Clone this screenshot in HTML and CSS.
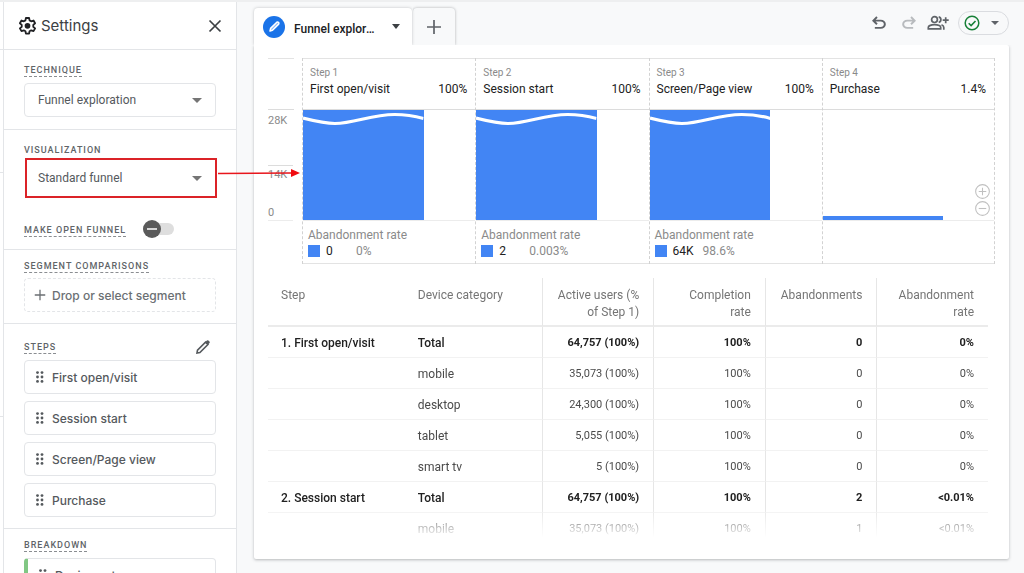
FILE: index.html
```html
<!DOCTYPE html>
<html lang="en">
<head>
<meta charset="utf-8">
<title>Funnel exploration</title>
<link rel="stylesheet" href="styles.css">
</head>
<body>
<svg class="defs" aria-hidden="true">
  <symbol id="grip" viewBox="0 0 8 12"><g fill="currentColor"><circle cx="1.5" cy="1.6" r="1.4"/><circle cx="6" cy="1.6" r="1.4"/><circle cx="1.5" cy="6" r="1.4"/><circle cx="6" cy="6" r="1.4"/><circle cx="1.5" cy="10.4" r="1.4"/><circle cx="6" cy="10.4" r="1.4"/></g></symbol>
  <symbol id="undo" viewBox="0 0 24 24"><path fill="currentColor" d="M7 19v-2.3h7.1q1.5 0 2.6-.9t1.1-2.3-1.1-2.3-2.6-.9H7.9l2.5 2.4L8.8 14.300 3.600 9.150 8.800 4l1.600 1.600L7.900 8h6.200q2.500 0 4.300 1.600t1.800 3.900-1.800 3.900T14.100 19z"/></symbol>
  <symbol id="plus" viewBox="0 0 16 16"><path d="M8 1v14M1 8h14" stroke="currentColor" stroke-width="1.7"/></symbol>
  <symbol id="wave" viewBox="0 0 121 18" preserveAspectRatio="none"><path d="M0 8C12 11 22 13.500 32 13.500C52 13.500 68 4.500 92 4.500C102 4.500 112 6 121 8.500" fill="none" stroke="#fff" stroke-width="3.200"/></symbol>
</svg>

<div class="app">
  <div class="rail"><div class="rail-a"></div><div class="rail-b"></div><div class="rail-c"></div></div>

  <aside class="panel">
    <header class="panel-head">
      <svg class="gear" viewBox="0 0 24 24"><path d="M10 2.500h4l.6 3 2.100 1.200 2.900-1 2 3.500-2.300 2v2.400l2.300 2-2 3.500-2.900-1-2.100 1.200-.6 3h-4l-.6-3-2.100-1.200-2.900 1-2-3.500 2.300-2v-2.400l-2.300-2 2-3.500 2.900 1 2.100-1.200z" fill="none" stroke="currentColor" stroke-width="2.300" stroke-linejoin="round"/><circle cx="12" cy="12.400" r="3.600" fill="currentColor"/></svg>
      <h1 class="panel-title">Settings</h1>
      <button class="icon-btn close" aria-label="Close"><svg viewBox="0 0 14 14"><path d="M1.500 1.500l11 11M12.500 1.500l-11 11" stroke="currentColor" stroke-width="1.700"/></svg></button>
    </header>

    <section class="section technique">
      <label class="label dashed" for="technique">TECHNIQUE</label>
      <div class="select-box"><select id="technique"><option>Funnel exploration</option></select></div>
    </section>

    <section class="section visual">
      <label class="label" for="visual">VISUALIZATION</label>
      <div class="select-box marked">
        <select id="visual"><option>Standard funnel</option></select>
        <svg class="pointer" viewBox="0 0 82 10"><path d="M0 5.500L74 5" stroke="#e8161c" stroke-width="1.600"/><path d="M73 1l9 4-9 4z" fill="#f00b10"/></svg>
      </div>
      <div class="open-row">
        <label class="label dashed" for="open">MAKE OPEN FUNNEL</label>
        <input class="toggle" type="checkbox" role="switch" id="open">
      </div>
    </section>

    <section class="section segments">
      <h2 class="label dashed">SEGMENT COMPARISONS</h2>
      <button class="chip drop"><svg class="drop-plus"><use href="#plus"/></svg>Drop or select segment</button>
    </section>

    <section class="section steps">
      <div class="steps-head">
        <h2 class="label dashed">STEPS</h2>
        <button class="icon-btn edit" aria-label="Edit steps"><svg viewBox="0 0 16 16"><path d="M2 14l.5-2.900 8-8 2.400 2.400-8 8z" fill="none" stroke="currentColor" stroke-width="1.600"/><path d="M10.200 3.200l1.700-1.700q.8-.6 1.500 0l1.100 1.100q.7.800 0 1.500l-1.700 1.700z" fill="currentColor"/></svg></button>
      </div>
      <div class="chips">
        <button class="chip"><svg class="grip"><use href="#grip"/></svg>First open/visit</button>
        <button class="chip"><svg class="grip"><use href="#grip"/></svg>Session start</button>
        <button class="chip"><svg class="grip"><use href="#grip"/></svg>Screen/Page view</button>
        <button class="chip"><svg class="grip"><use href="#grip"/></svg>Purchase</button>
      </div>
    </section>

    <section class="section breakdown">
      <h2 class="label dashed">BREAKDOWN</h2>
      <button class="chip dimension"><svg class="grip"><use href="#grip"/></svg>Device category</button>
    </section>
  </aside>

  <main class="main">
    <div class="topbar">
      <div class="tab">
        <span class="tab-badge"><svg viewBox="0 0 22 22"><path d="M7 15l.6-2.600 6.200-6.200q1-.6 1.700.2.800.8.200 1.700l-6.200 6.200z" fill="#8fb8f5" stroke="#fff" stroke-width="1.500" stroke-linejoin="round"/></svg></span>
        <span class="tab-name">Funnel exploration</span>
        <button class="caret" aria-label="Tab menu"></button>
      </div>
      <button class="tab-add" aria-label="Add tab"><svg><use href="#plus"/></svg></button>
      <div class="tools">
        <button class="icon-btn tool" aria-label="Undo"><svg><use href="#undo"/></svg></button>
        <button class="icon-btn tool redo" aria-label="Redo" disabled><svg viewBox="0 0 24 24"><g transform="translate(24 0) scale(-1 1)"><use href="#undo" width="24" height="24"/></g></svg></button>
        <button class="icon-btn share" aria-label="Share"><svg viewBox="0 0 22 16"><g fill="none" stroke="currentColor" stroke-width="1.700"><circle cx="7.500" cy="4.600" r="2.900"/><path d="M1.300 13.900v-1.400q0-1.300 1.400-1.900 2.200-1 4.800-1t4.800 1q1.400.6 1.400 1.900v1.400z"/><path d="M11.700 1.800q2.200.4 2.200 2.800t-2.200 2.800M14.500 9.800q2.300.9 2.300 2.700v2.200"/><path d="M18.700 2.200v6M15.700 5.200h6"/></g></svg></button>
        <button class="status" aria-label="Data status"><svg viewBox="0 0 16 16"><circle cx="8" cy="8" r="6.800" fill="none" stroke="#188038" stroke-width="1.500"/><path d="M4.700 8.200l2.400 2.400 4.400-4.600" fill="none" stroke="#188038" stroke-width="1.600"/></svg><i class="tri"></i></button>
      </div>
    </div>

    <div class="card">
      <div class="chart">
        <div class="axis">
          <div class="axis-head"></div>
          <div class="axis-plot"><span>28K</span><span class="mid">14K</span><span class="zero">0</span></div>
        </div>
        <div class="col">
          <div class="col-head"><span class="num">Step 1</span><span class="name">First open/visit</span><span class="pct">100%</span></div>
          <div class="plot"><div class="bar" style="height:100%"><svg class="wave"><use href="#wave"/></svg></div></div>
          <div class="col-foot"><span class="ar">Abandonment rate</span><i class="key"></i><span class="cnt">0</span><span class="rate">0%</span></div>
        </div>
        <div class="col">
          <div class="col-head"><span class="num">Step 2</span><span class="name">Session start</span><span class="pct">100%</span></div>
          <div class="plot"><div class="bar" style="height:100%"><svg class="wave"><use href="#wave"/></svg></div></div>
          <div class="col-foot"><span class="ar">Abandonment rate</span><i class="key"></i><span class="cnt">2</span><span class="rate">0.003%</span></div>
        </div>
        <div class="col">
          <div class="col-head"><span class="num">Step 3</span><span class="name">Screen/Page view</span><span class="pct">100%</span></div>
          <div class="plot"><div class="bar" style="height:100%"><svg class="wave"><use href="#wave"/></svg></div></div>
          <div class="col-foot"><span class="ar">Abandonment rate</span><i class="key"></i><span class="cnt wide">64K</span><span class="rate">98.6%</span></div>
        </div>
        <div class="col last">
          <div class="col-head"><span class="num">Step 4</span><span class="name">Purchase</span><span class="pct">1.4%</span></div>
          <div class="plot"><div class="bar" style="height:4%"></div>
            <div class="zoomers">
              <button class="icon-btn" aria-label="Zoom in"><svg viewBox="0 0 14 14"><g fill="none" stroke="currentColor"><circle cx="7" cy="7" r="6.400"/><path d="M7 3.500v7M3.500 7h7"/></g></svg></button>
              <button class="icon-btn" aria-label="Zoom out"><svg viewBox="0 0 14 14"><g fill="none" stroke="currentColor"><circle cx="7" cy="7" r="6.400"/><path d="M3.500 7h7"/></g></svg></button>
            </div>
          </div>
          <div class="col-foot"></div>
        </div>
      </div>

      <div class="table-wrap">
        <table>
          <colgroup><col class="c-dim"><col class="c-dim"><col class="c-num"><col class="c-num"><col class="c-num"><col class="c-num"></colgroup>
          <thead><tr><th>Step</th><th>Device category</th><th class="n">Active users (% of Step 1)</th><th class="n">Completion rate</th><th class="n">Abandonments</th><th class="n">Abandonment rate</th></tr></thead>
          <tbody>
            <tr class="total"><td>1. First open/visit</td><td>Total</td><td class="n">64,757 (100%)</td><td class="n">100%</td><td class="n">0</td><td class="n">0%</td></tr>
            <tr><td></td><td>mobile</td><td class="n">35,073 (100%)</td><td class="n">100%</td><td class="n">0</td><td class="n">0%</td></tr>
            <tr><td></td><td>desktop</td><td class="n">24,300 (100%)</td><td class="n">100%</td><td class="n">0</td><td class="n">0%</td></tr>
            <tr><td></td><td>tablet</td><td class="n">5,055 (100%)</td><td class="n">100%</td><td class="n">0</td><td class="n">0%</td></tr>
            <tr><td></td><td>smart tv</td><td class="n">5 (100%)</td><td class="n">100%</td><td class="n">0</td><td class="n">0%</td></tr>
            <tr class="total"><td>2. Session start</td><td>Total</td><td class="n">64,757 (100%)</td><td class="n">100%</td><td class="n">2</td><td class="n">&lt;0.01%</td></tr>
            <tr><td></td><td>mobile</td><td class="n">35,073 (100%)</td><td class="n">100%</td><td class="n">1</td><td class="n">&lt;0.01%</td></tr>
          </tbody>
        </table>
      </div>
    </div>
  </main>
</div>
</body>
</html>
```

FILE: styles.css
```css
* { box-sizing: border-box; }
body { margin: 0; font-family: Roboto, "Liberation Sans", sans-serif; font-size: 12px; color: #3c4043; background: #f8f9fa; }
.defs { display: none; }
button, select { font: inherit; color: inherit; background: none; border: 0; padding: 0; margin: 0; }
svg { display: block; }
h1, h2 { margin: 0; }

.app { display: flex; height: 100vh; overflow: hidden; border-top: 2px solid #eeeff0; }

/* Edge of the neighbouring panel */
.rail { width: 3px; background: #fff; }
.rail div { border-bottom: 1px solid #e3e5e8; }
.rail-a { height: 48px; }
.rail-b { height: 123px; }
.rail-c { height: 244px; }

/* Settings panel */
.panel { flex: 0 0 234px; background: #fff; border: solid #e3e5e8; border-width: 0 1px; z-index: 1; }
.panel-head { display: flex; align-items: center; height: 48px; padding: 0 14px; border-bottom: 1px solid #e3e5e8; }
.gear { width: 19px; height: 19px; color: #202124; }
.panel-title { flex: 1; margin-left: 4px; font-family: Inter, sans-serif; font-size: 15px; font-weight: 400; color: #3c4043; }
.icon-btn { display: flex; }
.close svg { width: 14px; height: 14px; }
.section { display: flex; flex-direction: column; align-items: flex-start; padding: 9px 20px 11px; border-bottom: 1px solid #e3e5e8; }
.label { height: 14px; font-size: 9px; line-height: 14px; font-weight: 500; letter-spacing: 1px; color: #606468; }
.dashed { border-bottom: 1px dashed #8a8d91; }
.technique { padding: 13px 20px 12px; gap: 6px; }
.visual { padding: 13px 20px 12px; gap: 4px; }
.segments { gap: 5px; }
.steps { padding-top: 16px; gap: 6px; }
.breakdown { gap: 6px; border: 0; }

.select-box { position: relative; width: 100%; height: 34px; border: 1px solid #e3e5e8; border-radius: 4px; }
.select-box select { appearance: none; width: 100%; height: 100%; padding: 0 13px; color: #55595d; }
.select-box::after { content: ""; position: absolute; right: 13px; top: 14px; border: 5px solid transparent; border-top-color: #757575; border-bottom: 0; }
.marked { border-color: transparent; }
.marked::before { content: ""; position: absolute; inset: -4px -2px -4px 0; border: 2px solid #db2328; pointer-events: none; }
.pointer { position: absolute; left: 100%; top: 6px; width: 82px; height: 10px; margin-left: 3px; }

.open-row { display: flex; align-items: center; gap: 17px; margin-top: 22px; height: 16px; }
.open-row .label { align-self: flex-end; }
.toggle { appearance: none; position: relative; width: 31px; height: 12px; margin: 0; border-radius: 6px; background: #dedede; }
.toggle::before { content: ""; position: absolute; left: 0; top: -3px; width: 18px; height: 18px; border-radius: 50%; background: #5a5a5a; }
.toggle::after { content: ""; position: absolute; left: 4px; top: 5px; width: 10px; height: 2px; background: #d6d6d6; }

.chips { display: flex; flex-direction: column; gap: 7px; width: 100%; }
.chip { display: flex; align-items: center; gap: 8px; width: 100%; height: 34px; padding: 0 11px; border: 1px solid #e3e5e8; border-radius: 4px; font-family: Inter, sans-serif; font-weight: 500; color: #55595d; }
.grip { width: 8px; height: 12px; }
.drop { gap: 6px; padding: 0 9px; border-style: dashed; color: #6b6f73; }
.drop-plus { width: 12px; height: 12px; }
.dimension { border-left: 4px solid #81c784; }
.steps-head { display: flex; justify-content: space-between; align-items: center; width: 100%; height: 14px; padding-right: 5px; }
.edit { color: #55595d; }
.edit svg { width: 16px; height: 16px; }

/* Tabs and tools */
.main { flex: 1; min-width: 0; display: flex; flex-direction: column; padding: 6px 15px 14px 17px; }
.topbar { display: flex; height: 37px; }
.tab { display: flex; align-items: center; width: 158px; padding: 0 12px 0 9px; background: #fff; border-radius: 4px 4px 0 0; box-shadow: 0 0 3px rgba(60, 64, 67, .3); clip-path: inset(-3px -3px 0 -3px); }
.tab-badge { width: 22px; height: 22px; border-radius: 50%; background: #1a73e8; }
.tab-name { flex: 1; min-width: 0; margin: 5px 15px 0 9px; overflow: hidden; white-space: nowrap; text-overflow: ellipsis; font-size: 12px; line-height: 16px; font-weight: 500; color: #202124; }
.caret, .tri { width: 0; height: 0; border: 4px solid transparent; border-top: 5px solid #3c4043; border-bottom: 0; }
.tri { border-top: 4px solid #5f6368; }
.tab-add { display: flex; align-items: center; justify-content: center; width: 42px; margin-left: 1px; border-radius: 4px 4px 0 0; box-shadow: 0 0 3px rgba(60, 64, 67, .4); clip-path: inset(-3px -3px 0 0); color: #5f6368; }
.tab-add svg { width: 16px; height: 16px; }
.tools { display: flex; align-items: center; height: 30px; margin-left: auto; color: #5f6368; }
.tool svg { width: 20px; height: 20px; }
.tool { margin-right: 10px; }
.redo { margin-right: 8px; color: #b8bbbe; }
.share { margin-right: 9px; }
.share svg { width: 22px; height: 16px; }
.status { display: flex; align-items: center; justify-content: space-between; width: 51px; height: 24px; padding: 0 9px 0 5px; border: 1px solid #dadce0; border-radius: 12px; }
.status svg { width: 16px; height: 16px; }

/* Report card */
.card { flex: 1; min-height: 0; display: flex; flex-direction: column; padding: 13px 14px 21px; background: #fff; border-radius: 0 2px 2px 2px; box-shadow: 0 1px 3px rgba(60, 64, 67, .35); clip-path: inset(0 -4px -5px -4px); }
.chart { display: grid; grid-template-columns: 34px repeat(4, 1fr); }
.axis-head, .col-head { height: 52px; border-top: 1px solid #e3e3e3; border-bottom: 1px solid #dcdcdc; }
.axis-head { margin-right: 8px; }
.axis-plot { display: flex; flex-direction: column; height: 111px; margin-right: 9px; padding-top: 3px; border-bottom: 1px solid #ececec; font-size: 11px; line-height: 15px; color: #8a8a8a; }
.mid { margin-top: 37px; padding-top: 1px; border-top: 1px solid #dcdcdc; }
.zero { margin-top: auto; }
.col { border-left: 1px dashed #d2d2d2; min-width: 0; }
.last { border-right: 1px dashed #d2d2d2; }
.col-head { display: grid; grid-template-columns: 1fr auto; grid-template-rows: 14px 18px; align-content: start; padding: 7px 8px 0 7px; }
.num { grid-column: 1 / 3; font-size: 10px; line-height: 14px; color: #8a8a8a; }
.name, .pct { line-height: 18px; font-size: 12px; color: #212121; white-space: nowrap; }
.plot { display: flex; align-items: flex-end; justify-content: space-between; height: 111px; border-bottom: 1px solid #ececec; }
.bar { width: 70%; background: #4285f4; }
.wave { width: 100%; height: 18px; }
.zoomers { display: flex; flex-direction: column; gap: 2px; margin-right: 4px; padding-bottom: 4px; color: #c0c0c0; }
.zoomers svg { width: 15px; height: 15px; }
.col-foot { display: grid; grid-template-columns: 12px auto 1fr; grid-template-rows: 16px 16px; align-content: start; align-items: center; height: 43px; padding: 6px 5px 0; border-bottom: 1px solid #e3e3e3; color: #8a8a8a; }
.ar { grid-column: 1 / 4; }
.key { width: 12px; height: 12px; background: #4285f4; }
.cnt { min-width: 36px; padding-left: 6px; color: #212121; }
.wide { padding-right: 8px; }

.table-wrap { flex: 1; min-height: 0; margin: 14px 7px 0 0; overflow: hidden; mask-image: linear-gradient(to top, transparent, #000 30px); }
table { width: 100%; table-layout: fixed; border-collapse: separate; border-spacing: 0; }
.c-dim { width: 19%; }
th { height: 49px; padding: 9px 13px 0; text-align: left; vertical-align: top; font-weight: 400; line-height: 17px; color: #757575; border-bottom: 2px solid #ebebeb; }
td { height: 31px; padding: 2px 13px 0; line-height: 16px; color: #4a4a4a; border-bottom: 1px solid #f2f2f2; }
.n { text-align: right; border-left: 1px solid #e6e6e6; padding-right: 14px; }
td.n { padding-top: 1px; font-size: 11px; }
.total td { font-weight: 500; color: #212121; }
.total .n { font-weight: 700; }
```
